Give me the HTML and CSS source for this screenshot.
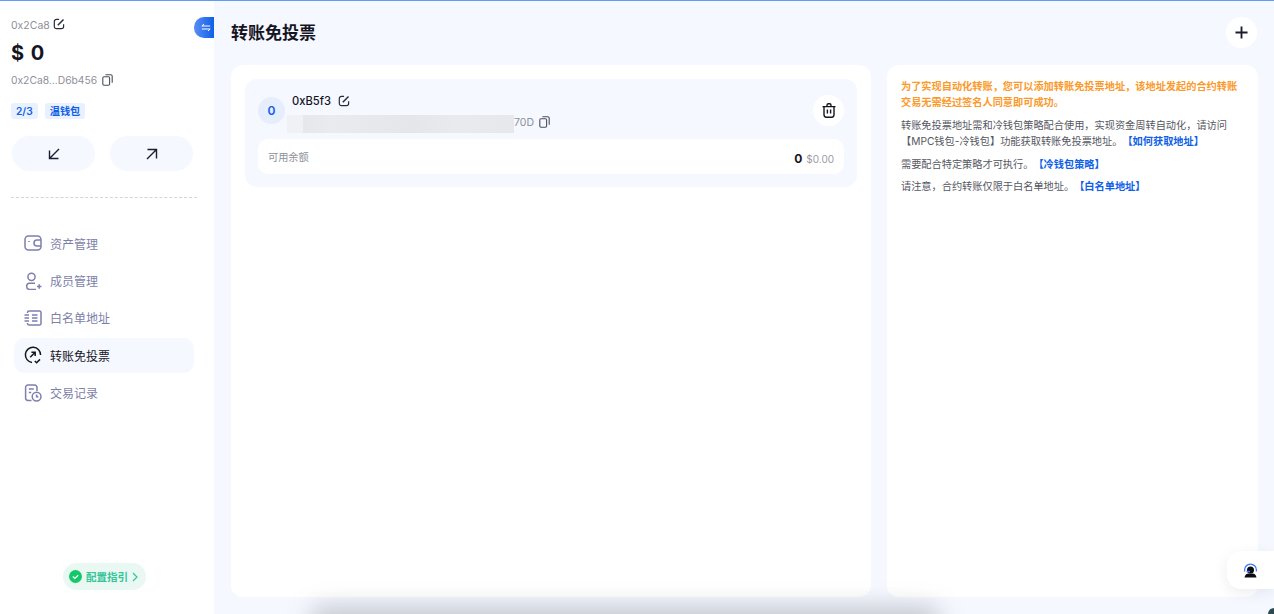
FILE: index.html
```html
<!DOCTYPE html>
<html lang="en">
<head>
    <meta charset="UTF-8">
    <meta name="viewport" content="width=device-width, initial-scale=1.0">
    <title>转账免投票</title>
    <link rel="stylesheet" href="styles.css">
</head>
<body>
    <div class="app">
        <aside class="sidebar">
            <div class="switch-tab">
                <svg width="10" height="9" viewBox="0 0 12 10" fill="none" stroke="#fff" stroke-width="1.2"><path d="M1 3.2h10M1 3.2l2.600-2.400M11 6.800H1M11 6.800L8.400 9.200"/></svg>
            </div>
            <div class="wallet-name">
                <span>0x2Ca8</span>
                <svg class="edit" width="12" height="12" viewBox="0 0 12 12" fill="none" stroke="#2b2b3a" stroke-width="1.2"><path d="M10.600 6.200v2.300a2.200 2.200 0 0 1-2.200 2.200H3.500a2.200 2.200 0 0 1-2.200-2.200V3.600a2.200 2.200 0 0 1 2.200-2.200h2.600"/><path d="M4.800 7.200L10.500 1.500" stroke-width="1.5"/></svg>
            </div>
            <div class="balance">$ 0</div>
            <div class="wallet-addr">
                <span>0x2Ca8...D6b456</span>
                <svg width="11" height="12" viewBox="0 0 11 12" fill="none" stroke="#4b4f5c" stroke-width="1.1"><rect x="0.8" y="2.8" width="6.8" height="8.4" rx="1.2"/><path d="M3.400 0.8h5.400a1.400 1.400 0 0 1 1.400 1.400v6.600"/></svg>
            </div>
            <div class="tags">
                <span class="tag">2/3</span>
                <span class="tag">温钱包</span>
            </div>
            <div class="actions">
                <button class="round-btn">
                    <svg width="12" height="12" viewBox="0 0 12 12" fill="none" stroke="#1c1c2e" stroke-width="1.4"><path d="M11 1L1.500 10.500M1.500 2.500v8h9"/></svg>
                </button>
                <button class="round-btn">
                    <svg width="12" height="12" viewBox="0 0 12 12" fill="none" stroke="#1c1c2e" stroke-width="1.4"><path d="M1 11l9.500-9.500M1.500 1.500h9v9"/></svg>
                </button>
            </div>
            <div class="divider"></div>
            <nav class="menu">
                <a class="menu-item">
                    <svg width="18" height="16" viewBox="0 0 18 16" fill="none" stroke="#7d7fb0" stroke-width="1.5"><rect x="1" y="1" width="16" height="14" rx="3.500"/><path d="M17 5h-4a3 3 0 0 0 0 6h4"/><path d="M5 6v1"/></svg>
                    <span>资产管理</span>
                </a>
                <a class="menu-item">
                    <svg width="18" height="18" viewBox="0 0 18 18" fill="none" stroke="#7d7fb0" stroke-width="1.5"><circle cx="7.500" cy="4.800" r="3.600"/><path d="M11 11.200H5a3.200 3.200 0 0 0 0 6.200h7"/><path d="M13 14.500h4.500M15.200 12.300v4.400"/></svg>
                    <span>成员管理</span>
                </a>
                <a class="menu-item">
                    <svg width="18" height="16" viewBox="0 0 18 16" fill="none" stroke="#7d7fb0" stroke-width="1.5"><path d="M3.500 3V2.600A1.600 1.600 0 0 1 5.100 1h10.300A1.600 1.600 0 0 1 17 2.600v10.800a1.600 1.600 0 0 1-1.600 1.600H5.100a1.600 1.600 0 0 1-1.600-1.600V13"/><path d="M8 5h5.500M8 8h5.500M8 11h5.500M0.500 5H5M0.500 8H5M0.500 11H5"/></svg>
                    <span>白名单地址</span>
                </a>
                <a class="menu-item active">
                    <svg width="18" height="18" viewBox="0 0 18 18" fill="none" stroke="#15151f" stroke-width="1.5"><path d="M8 16.400A7.600 7.600 0 1 1 16.600 9"/><path d="M6.200 11.200l5-5M7.400 6.200h3.800V10"/><path d="M10.800 15l1.800 1.800L16 13.400"/></svg>
                    <span>转账免投票</span>
                </a>
                <a class="menu-item">
                    <svg width="18" height="18" viewBox="0 0 18 18" fill="none" stroke="#7d7fb0" stroke-width="1.5"><path d="M7.500 16.400H4a2.400 2.400 0 0 1-2.400-2.400V3.400A2.400 2.400 0 0 1 4 1h6.600A2.400 2.400 0 0 1 13 3.400V7"/><path d="M4.800 5h5M4.800 8.600h2.400"/><circle cx="12.600" cy="12.600" r="4.400"/><path d="M12.600 10.600v2.200h1.800"/></svg>
                    <span>交易记录</span>
                </a>
            </nav>
            <div class="guide-wrap">
                <div class="guide">
                    <svg width="13" height="13" viewBox="0 0 13 13"><circle cx="6.500" cy="6.500" r="6.500" fill="#12c868"/><path d="M3.800 6.600l2 1.800 3.400-3.200" fill="none" stroke="#fff" stroke-width="1.3"/></svg>
                    <span>配置指引</span>
                    <svg width="6" height="10" viewBox="0 0 6 10" fill="none" stroke="#35c598" stroke-width="1.2"><path d="M1 1l4 4-4 4"/></svg>
                </div>
            </div>
        </aside>

        <main class="main">
            <header class="page-head">
                <h1>转账免投票</h1>
                <button class="add-btn">
                    <svg width="13" height="13" viewBox="0 0 14 14" stroke="#1c1c2e" stroke-width="2"><path d="M7 0.500v13M0.500 7h13"/></svg>
                </button>
            </header>
            <div class="columns">
                <section class="panel list-panel">
                    <div class="addr-card">
                        <div class="addr-top">
                            <div class="avatar">0</div>
                            <div class="addr-info">
                                <div class="addr-name">
                                    <span>0xB5f3</span>
                                    <svg width="12" height="12" viewBox="0 0 12 12" fill="none" stroke="#2b2b3a" stroke-width="1.2"><path d="M10.600 6.200v2.300a2.200 2.200 0 0 1-2.200 2.200H3.500a2.200 2.200 0 0 1-2.200-2.200V3.600a2.200 2.200 0 0 1 2.200-2.200h2.600"/><path d="M4.800 7.200L10.500 1.500" stroke-width="1.5"/></svg>
                                </div>
                                <div class="addr-line">
                                    <div class="addr-blur"></div>
                                    <span>70D</span>
                                    <svg width="11" height="12" viewBox="0 0 11 12" fill="none" stroke="#4b4f5c" stroke-width="1.1"><rect x="0.8" y="2.8" width="6.8" height="8.4" rx="1.2"/><path d="M3.400 0.8h5.400a1.400 1.400 0 0 1 1.400 1.400v6.600"/></svg>
                                </div>
                            </div>
                            <button class="trash-btn">
                                <svg width="14" height="15" viewBox="0 0 14 15" fill="none" stroke="#15151f" stroke-width="1.4"><path d="M0.500 3.600h13M5 3.400V2.200A1.400 1.400 0 0 1 6.400 0.800h1.200A1.400 1.400 0 0 1 9 2.200v1.200"/><path d="M2 3.600v8.200a2.400 2.400 0 0 0 2.400 2.400h5.200a2.400 2.400 0 0 0 2.400-2.400V3.600"/><path d="M5.400 6.600v4M8.600 6.600v4"/></svg>
                            </button>
                        </div>
                        <div class="balance-row">
                            <span class="balance-label">可用余额</span>
                            <span class="balance-value"><b>0</b><em>$0.00</em></span>
                        </div>
                    </div>
                </section>
                <section class="panel note-panel">
                    <p class="warn">为了实现自动化转账，您可以添加转账免投票地址，该地址发起的合约转账交易无需经过签名人同意即可成功。</p>
                    <p><span class="line">转账免投票地址需和冷钱包策略配合使用，实现资金周转自动化，请访问</span><span>【MPC钱包-冷钱包】功能获取转账免投票地址。</span><a>【如何获取地址】</a></p>
                    <p>需要配合特定策略才可执行。<a>【冷钱包策略】</a></p>
                    <p>请注意，合约转账仅限于白名单地址。<a>【白名单地址】</a></p>
                </section>
            </div>
        </main>

        <div class="support">
            <svg width="15" height="15" viewBox="0 0 15 15"><path d="M1.600 8.500V7a5.900 5.900 0 0 1 11.800 0v1.500" fill="none" stroke="#3d7bf7" stroke-width="1.3"/><circle cx="7.500" cy="7" r="3.500" fill="#0b0b12"/><path d="M1.500 14.500c.5-2.600 2-3.600 4-3.900h4c2 .3 3.500 1.300 4 3.900z" fill="#0b0b12"/><rect x="3.500" y="7.800" width="3.500" height="1.500" fill="#3d7bf7"/></svg>
        </div>
        <div class="bottom-shadow"></div>
        <div class="corner"></div>
    </div>
</body>
</html>
```

FILE: styles.css
```css
:root {
    --bg-color: #f5f8ff;
    --text-color: #15151f;
    --grey-text: #8e9099;
    --menu-color: #7d7fa8;
    --blue-color: #0f5fe8;
}
* {
    box-sizing: border-box;
}
html, body {
    margin: 0;
    padding: 0;
    height: 100%;
    overflow: hidden;
}
body {
    font-family: Inter, 'Noto Sans CJK SC', sans-serif;
    color: var(--text-color);
    background-color: var(--bg-color);
    text-spacing-trim: space-all;
}
button {
    border: none;
    padding: 0;
    display: flex;
    align-items: center;
    justify-content: center;
    cursor: pointer;
}
.app {
    position: relative;
    display: flex;
    height: 614px;
    border-top: 1px solid #5f9bf7;
    overflow: hidden;
}

/* sidebar */
.sidebar {
    position: relative;
    width: 214px;
    flex-shrink: 0;
    background-color: #fff;
    padding: 17px 17px 0 11px;
    display: flex;
    flex-direction: column;
}
.switch-tab {
    position: absolute;
    top: 16px;
    right: 0;
    width: 20px;
    height: 21px;
    border-radius: 10px 0 0 10px;
    background: linear-gradient(90deg, #5a8df5, #0f5fe8);
    display: flex;
    align-items: center;
    justify-content: center;
    padding-left: 3px;
}
.wallet-name {
    display: flex;
    align-items: center;
    gap: 3px;
    height: 14px;
    font-size: 10.500px;
    color: var(--grey-text);
}
.wallet-name .edit {
    margin-top: -2px;
}
.balance {
    font-size: 20px;
    font-weight: 700;
    line-height: 24px;
    margin-top: 9px;
    word-spacing: 2px;
}
.wallet-addr {
    display: flex;
    align-items: center;
    gap: 5px;
    height: 14px;
    margin-top: 8px;
    font-size: 10.300px;
    color: var(--grey-text);
}
.tags {
    display: flex;
    gap: 7px;
    margin-top: 16px;
}
.tag {
    height: 16px;
    line-height: 16px;
    padding: 0 5px;
    border-radius: 3px;
    font-size: 10.200px;
    font-weight: 600;
    color: var(--blue-color);
    background-color: #e9f0fe;
}
.actions {
    display: flex;
    gap: 15px;
    margin-top: 17px;
    padding-left: 1px;
}
.round-btn {
    width: 83px;
    height: 35px;
    border-radius: 18px;
    background-color: var(--bg-color);
}
.divider {
    margin-top: 26px;
    border-top: 1px dashed #d3d5da;
    width: 186px;
}
.menu {
    margin-top: 28px;
    margin-left: 3px;
    display: flex;
    flex-direction: column;
    gap: 3px;
}
.menu-item {
    display: flex;
    align-items: center;
    gap: 8px;
    height: 34.400px;
    width: 180px;
    padding-left: 10px;
    border-radius: 10px;
    font-size: 12px;
    color: var(--menu-color);
}
.menu-item svg {
    flex-shrink: 0;
}
.menu-item.active {
    color: var(--text-color);
    background-color: var(--bg-color);
}
.guide-wrap {
    margin-top: auto;
    margin-bottom: 24px;
    margin-left: 52px;
}
.guide {
    display: inline-flex;
    align-items: center;
    gap: 4px;
    height: 27px;
    padding: 0 8px 0 6px;
    border-radius: 14px;
    font-size: 10.500px;
    font-weight: 600;
    color: #35c598;
    background-color: #e9f8f3;
}

/* main */
.main {
    flex: 1;
    padding: 13px 16px 17px 17px;
    display: flex;
    flex-direction: column;
}
.page-head {
    display: flex;
    align-items: center;
    justify-content: space-between;
    height: 36px;
    margin-bottom: 15px;
}
h1 {
    margin: 0 0 2px;
    font-size: 17px;
    font-weight: 600;
}
.add-btn {
    width: 31px;
    height: 31px;
    margin-right: 1px;
    border-radius: 50%;
    background-color: #fff;
}
.columns {
    flex: 1;
    display: flex;
    gap: 16px;
}
.panel {
    background-color: #fff;
    border-radius: 12px;
}
.list-panel {
    width: 640px;
    padding: 14px;
}
.addr-card {
    background-color: var(--bg-color);
    border-radius: 12px;
    padding: 13px;
}
.addr-top {
    display: flex;
    align-items: center;
    height: 36px;
    margin-bottom: 11px;
}
.avatar {
    width: 27px;
    height: 27px;
    border-radius: 50%;
    background-color: #e6edfd;
    color: var(--blue-color);
    font-size: 12px;
    font-weight: 600;
    text-align: center;
    line-height: 27px;
    flex-shrink: 0;
}
.addr-info {
    flex: 1;
    margin-left: 2px;
    margin-top: 5.500px;
}
.addr-name {
    display: flex;
    align-items: center;
    gap: 7px;
    font-size: 11.200px;
    font-weight: 500;
    height: 17px;
    padding-left: 5px;
}
.addr-line {
    display: flex;
    align-items: center;
    margin-top: 1.500px;
    height: 22px;
    font-size: 10.500px;
    color: var(--grey-text);
}
.addr-line svg {
    margin-left: 5px;
}
.addr-blur {
    width: 227px;
    height: 18px;
    margin-top: 4px;
    background: linear-gradient(90deg, #eff1f5 0, #eff1f5 7%, #e5e7eb 7%, #e9ebee 20%, #e4e6ea 55%, #e8eaed 75%, #e6e8eb 100%);
}
.trash-btn {
    width: 31px;
    height: 31px;
    border-radius: 50%;
    background-color: #fff;
    flex-shrink: 0;
}
.balance-row {
    display: flex;
    align-items: center;
    justify-content: space-between;
    height: 35px;
    padding: 0 10px;
    background-color: #fff;
    border-radius: 10px;
}
.balance-label {
    font-size: 10.200px;
    color: var(--grey-text);
}
.balance-value b {
    font-size: 12px;
    font-weight: 700;
}
.balance-value em {
    font-style: normal;
    font-size: 10px;
    color: #9a9ca6;
    margin-left: 4px;
}
.note-panel {
    width: 371px;
    padding: 13px 14px 0;
    font-size: 10.200px;
    line-height: 16.300px;
    color: #55575f;
}
.note-panel p {
    margin: 0 0 6.300px;
}
.note-panel .line {
    display: block;
}
.warn {
    color: #fb9a2c;
    font-weight: 600;
}
.note-panel a {
    color: var(--blue-color);
    font-weight: 600;
}

/* floating bits */
.support {
    position: absolute;
    right: 0;
    top: 550px;
    width: 47px;
    height: 38px;
    border-radius: 14px 0 0 14px;
    background-color: #fff;
    box-shadow: 0 4px 14px rgba(30, 40, 70, 0.08);
    display: flex;
    align-items: center;
    justify-content: center;
    padding-right: 1px;
}
.bottom-shadow {
    position: absolute;
    left: 310px;
    width: 630px;
    bottom: -18px;
    height: 24px;
    border-radius: 20px;
    background-color: rgba(70, 75, 85, 0.32);
    filter: blur(12px);
}
.corner {
    position: absolute;
    right: -6px;
    bottom: -6px;
    width: 12px;
    height: 12px;
    border-radius: 50%;
    background-color: #2c4a4f;
}
```
